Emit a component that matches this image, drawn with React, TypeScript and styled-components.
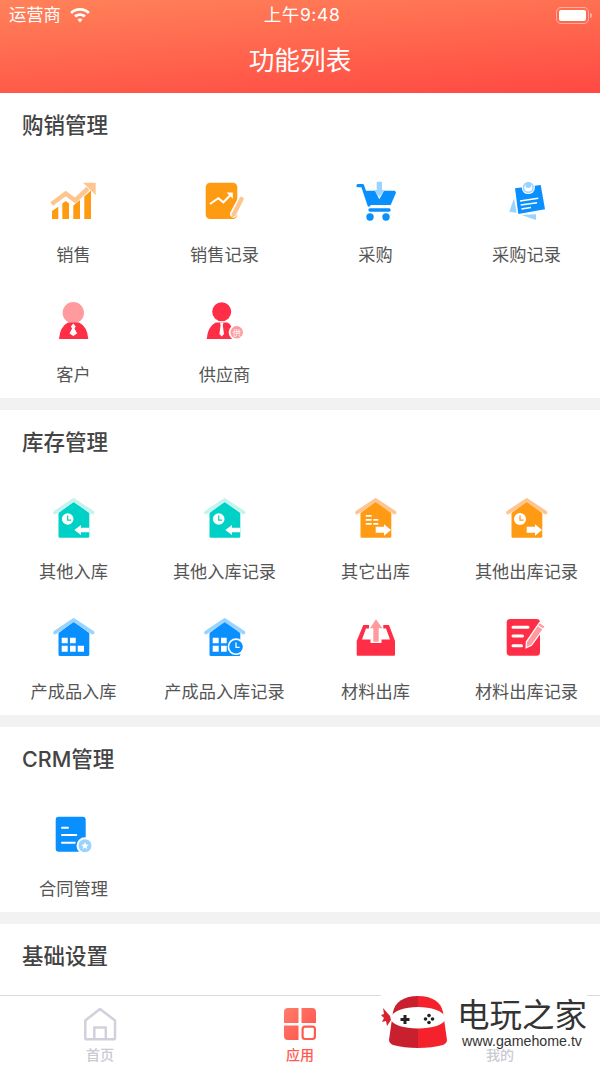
import React from "react";
import styled, { createGlobalStyle } from "styled-components";

const CJK = `Inter, "Noto Sans CJK SC", "Noto Sans", sans-serif`;

const GlobalStyle = createGlobalStyle`
  html, body {
    margin: 0;
    padding: 0;
    background: #fff;
  }
`;

const Page = styled.div`
  width: 600px;
  height: 1067px;
  position: relative;
  display: flex;
  flex-direction: column;
  overflow: hidden;
  font-family: ${CJK};
  background: #f2f2f2;
`;

const Header = styled.header`
  height: 93px;
  flex: none;
  color: #fff;
  background: linear-gradient(176deg, #ff8259 0%, #ff4943 100%);
`;

const StatusBar = styled.div`
  height: 30px;
  display: grid;
  grid-template-columns: 1fr auto 1fr;
  align-items: center;
  padding: 0 11px 0 9px;
`;

const Carrier = styled.div`
  display: flex;
  align-items: center;
  gap: 9px;
  font-size: 17.3px;
  line-height: 30px;
`;

const Clock = styled.div`
  padding-left: 6px;
  font-size: 17.5px;
  line-height: 30px;
  letter-spacing: 0.6px;
`;

const Battery = styled.div`
  justify-self: end;
  width: 33px;
  height: 17px;
  box-sizing: border-box;
  border: 1px solid rgba(255, 255, 255, 0.45);
  border-radius: 5px;
  padding: 2px;
  position: relative;

  &::before {
    content: "";
    display: block;
    height: 100%;
    background: #fff;
    border-radius: 2px;
  }

  &::after {
    content: "";
    position: absolute;
    right: -4px;
    top: 5px;
    width: 2px;
    height: 5px;
    border-radius: 0 2px 2px 0;
    background: rgba(255, 255, 255, 0.45);
  }
`;

const NavTitle = styled.h1`
  margin: 0;
  height: 63px;
  padding-bottom: 1px;
  box-sizing: border-box;
  display: flex;
  align-items: center;
  justify-content: center;
  font-size: 25.7px;
  line-height: 34px;
  font-weight: 400;
`;

const Content = styled.main`
  flex: 1;
  min-height: 0;
  overflow: hidden;
  display: flex;
  flex-direction: column;
  gap: 12px;
`;

const Section = styled.section`
  flex: none;
  background: #fff;

  &:last-child {
    flex: 1;
  }
`;

const SectionTitle = styled.h2`
  margin: 0;
  height: 65px;
  padding: 0 0 1px 22px;
  box-sizing: border-box;
  display: flex;
  align-items: center;
  font-size: 21.5px;
  line-height: 30px;
  font-weight: 500;
  color: #444;
`;

const Grid = styled.div`
  display: grid;
  grid-template-columns: repeat(4, 151px);
  grid-auto-rows: 120px;
  justify-content: center;
`;

const Item = styled.div`
  display: flex;
  flex-direction: column;
  align-items: center;
  padding-top: 20px;
  box-sizing: border-box;
`;

const IconSvg = styled.svg`
  display: block;
  width: 61px;
  height: 48px;
  flex: none;
`;

const Label = styled.span`
  margin-top: 17px;
  font-size: 17.2px;
  line-height: 24px;
  white-space: nowrap;
  color: #555;
`;

const TabBar = styled.nav`
  flex: none;
  height: 72px;
  box-sizing: border-box;
  border-top: 1.5px solid #dcdcdc;
  background: #fff;
  display: grid;
  grid-template-columns: repeat(3, 1fr);
`;

const Tab = styled.div`
  display: flex;
  flex-direction: column;
  align-items: center;
  padding-top: 10.5px;
`;

const TabIconSvg = styled.svg`
  display: block;
  width: 34px;
  height: 34px;
`;

const TabLabel = styled.span<{ $active?: boolean }>`
  margin-top: 4px;
  font-size: 14px;
  line-height: 20px;
  font-weight: 500;
  color: ${(p) => (p.$active ? "#ff5a50" : "#c9cad3")};
`;

const Watermark = styled.div`
  position: absolute;
  left: 381px;
  top: 990px;
  width: 206px;
  height: 59px;
  background: #fff;
  display: flex;
  gap: 8px;
`;

const WatermarkLogo = styled.svg`
  display: block;
  width: 69px;
  height: 59px;
  flex: none;
`;

const WatermarkText = styled.div`
  display: flex;
  flex-direction: column;
  align-items: center;
  width: 128px;
  color: #333;
`;

const WatermarkName = styled.div`
  margin-top: 6px;
  font-size: 32.5px;
  line-height: 40px;
  white-space: nowrap;
`;

const WatermarkUrl = styled.div`
  margin-top: -3px;
  font-family: "Liberation Sans", Arial, sans-serif;
  font-size: 14.2px;
  line-height: 16px;
  white-space: nowrap;
`;

const ORANGE = "#ff9a13";
const ORANGE_L = "#ffc58f";
const BLUE = "#0a8fff";
const BLUE_L = "#99d3ff";
const RED = "#ff2e47";
const RED_L = "#ff9a9e";
const TEAL = "#00d1c6";
const TEAL_L = "#c5f3ee";

const Icon = ({ children }: { children: React.ReactNode }) => (
  <IconSvg viewBox="0 0 61 48">{children}</IconSvg>
);

const SalesIcon = () => (
  <Icon>
    <path fill={ORANGE} d="M9 33l6.3-4.3V41H9zM19.3 25.5l3.4-2.5 3.3 2.500V41h-6.700zM30.300 27.500l6.700-5.500V41h-6.700zM41.300 18.500l6.700-6V41h-6.700z" />
    <path fill="none" stroke={ORANGE_L} strokeWidth="4.600" d="M8.700 26l14-10.500 9.500 7L45 10.500" />
    <path fill={ORANGE_L} d="M40 4.700h12.700V17z" />
  </Icon>
);

const SalesRecordIcon = () => (
  <Icon>
    <rect x="11.700" y="4.700" width="31.600" height="36.300" rx="4.500" fill={ORANGE} />
    <path fill="none" stroke="#fff" strokeWidth="2" d="M16 26l8.300-5.700 5 4 8-8" />
    <path fill="#fff" d="M32.500 14.500h6.300v6.300z" />
    <path fill="none" stroke="#fff" strokeWidth="7" strokeLinecap="round" d="M47.500 21L39.500 36" />
    <path fill="none" stroke={ORANGE_L} strokeWidth="4.400" strokeLinecap="round" d="M47.500 21L40 36" />
    <path fill={ORANGE_L} d="M37.500 35l4.500 2-4 3z" />
  </Icon>
);

const CartIcon = () => (
  <Icon>
    <path fill="none" stroke={BLUE} strokeWidth="3.200" strokeLinecap="round" strokeLinejoin="round" d="M13 7.700h4.600L24 27" />
    <path fill={BLUE} d="M19.300 12.700H30l4.300 8.600 4.700-8.600h11l1 2L45.700 27H23.500z" />
    <path fill={BLUE_L} d="M31.700 3.700H37V12h2.700l-5.400 6.700L29 12h2.700z" />
    <rect x="23.300" y="30.300" width="22.400" height="3.400" rx="1.700" fill={BLUE} />
    <circle cx="25" cy="39" r="3.700" fill={BLUE} />
    <circle cx="41" cy="39" r="3.700" fill={BLUE} />
  </Icon>
);

const NoteIcon = () => (
  <Icon>
    <path fill={BLUE_L} d="M18 20.300l-4.700 13.400 7.400 1zM25.700 37L40 42v-5.700z" />
    <path fill={BLUE} d="M19 10.300L44.700 7 49 31.300 22.300 36z" />
    <circle cx="32.300" cy="9.500" r="6.600" fill="#fff" />
    <circle cx="32.300" cy="9.500" r="4.800" fill="none" stroke={BLUE_L} strokeWidth="1.600" />
    <circle cx="32.300" cy="7" r="3" fill={BLUE_L} />
    <path fill="none" stroke="#fff" strokeWidth="1.600" d="M24 23l18.300-2.700M24.700 27L41 24.700M25.400 31l9.600-1.500" />
  </Icon>
);

const CustomerIcon = () => (
  <Icon>
    <circle cx="30.300" cy="14.700" r="10.700" fill={RED_L} />
    <path fill={RED} d="M16 41q1-12.500 9-16.500h11q8.300 4 9.300 16.500z" />
    <path fill="#fff" d="M30.300 25.500l2.400 3-1.200 2 2.600 5-3.800 2.500-3.800-2.500 2.600-5-1.200-2z" />
  </Icon>
);

const SupplierIcon = () => (
  <Icon>
    <circle cx="27.700" cy="13.700" r="9.500" fill={RED} />
    <path fill={RED} d="M12.700 41q1-12.500 9-16.500h12q5.500 2.500 6 16.500z" />
    <path fill="#fff" d="M26 24.500h3.400l-.6 3 1.200 8.500-2.300 2.500-2.300-2.500 1.200-8.500z" />
    <circle cx="42.700" cy="34.300" r="8" fill="#fff" />
    <circle cx="42.700" cy="34.300" r="6.200" fill={RED_L} />
    <text x="42.700" y="37.500" textAnchor="middle" fontSize="8.500" fill="#fff" fontFamily={CJK}>供</text>
  </Icon>
);

const House = ({
  body,
  roof,
  bottom = 42.7,
  children,
}: {
  body: string;
  roof: string;
  bottom?: number;
  children?: React.ReactNode;
}) => (
  <Icon>
    <path
      fill={body}
      d={`M15.500 18L30.700 6.500 46.300 18V${bottom - 1.5}q0 1.500-1.500 1.500H17q-1.500 0-1.500-1.500z`}
    />
    <path
      fill="none"
      stroke={roof}
      strokeWidth="3.800"
      strokeLinecap="round"
      strokeLinejoin="round"
      d="M12 17.500L30.700 5l18.800 12.500"
    />
    {children}
  </Icon>
);

const ClockFace = ({ bg, cx, cy, r }: { bg: string; cx: number; cy: number; r: number }) => (
  <>
    <circle cx={cx} cy={cy} r={r} fill="#fff" />
    <path
      fill="none"
      stroke={bg}
      strokeWidth="1.200"
      d={`M${cx} ${cy - r * 0.6}V${cy + r * 0.2}H${cx + r * 0.6}`}
    />
  </>
);

const LeftArrow = () => (
  <path fill="#fff" d="M31.300 35l6.700-5v2.700h8.300v4.600H38V40z" />
);

const RightArrow = () => (
  <path fill="#fff" d="M30.700 31.700H39v-2.400l7 5.700-7 5.700v-3h-8.300z" />
);

const TealInIcon = () => (
  <House body={TEAL} roof={TEAL_L}>
    <ClockFace bg={TEAL} cx={24.7} cy={24} r={5.800} />
    <LeftArrow />
  </House>
);

const OrangeOutIcon = () => (
  <House body={ORANGE} roof={ORANGE_L}>
    <path fill="#fff" d="M20.700 20h6v1.700h-6zM20.700 24h6v1.700h-6zM28.300 24h5v1.700h-5zM20.700 28h6v1.700h-6zM28.300 28h5v1.700h-5z" />
    <RightArrow />
  </House>
);

const OrangeClockOutIcon = () => (
  <House body={ORANGE} roof={ORANGE_L}>
    <ClockFace bg={ORANGE} cx={24} cy={24} r={6} />
    <RightArrow />
  </House>
);

const Windows = ({ full }: { full?: boolean }) => (
  <path
    fill="#fff"
    d={`M18.700 22.700h6v5.600h-6zM27 22.700h5.700v5.600H27zM18.700 30.700h6v6h-6zM27 30.700h5.700v6H27z${full ? "M34.700 30.700H41v6h-6.300z" : ""}`}
  />
);

const BlueInIcon = () => (
  <House body={BLUE} roof={BLUE_L} bottom={41}>
    <Windows full />
  </House>
);

const BlueInRecordIcon = () => (
  <House body={BLUE} roof={BLUE_L} bottom={41}>
    <Windows />
    <circle cx="42" cy="31.700" r="8.400" fill="#fff" />
    <circle cx="42" cy="31.700" r="6.800" fill={BLUE} />
    <path fill="none" stroke="#fff" strokeWidth="1.300" d="M42 27.500v4.800h3.600" />
  </House>
);

const InboxIcon = () => (
  <Icon>
    <path
      fill={RED}
      d="M11.700 26L18.300 10H24v3.500h-3L17 24.500h8.500V28H36.500v-3.500H45L41 13.500h-2.700V10H44L50 26v13.700q0 1-1 1H12.700q-1 0-1-1z"
    />
    <path fill={RED_L} d="M31 4.300l6.300 9h-3.600v13.400h-5.400V13.300H25z" />
  </Icon>
);

const FormIcon = () => (
  <Icon>
    <rect x="10.700" y="4" width="33.300" height="36.700" rx="3.500" fill={RED} />
    <path
      fill="none"
      stroke="#fff"
      strokeWidth="3"
      strokeLinecap="round"
      d="M17 12.300h15M17 21h9.500M17 30.700h8.500"
    />
    <path fill={RED_L} stroke="#fff" strokeWidth="1.200" d="M43.500 7.500l5.700 3.800-13.700 19-5.400 2.500.3-6z" />
    <path fill="none" stroke="#fff" strokeWidth="1.200" d="M41.500 10.500l5.700 3.800" />
  </Icon>
);

const ContractIcon = () => (
  <Icon>
    <rect x="12.700" y="4.700" width="30" height="35" rx="3" fill={BLUE} />
    <path fill="none" stroke="#fff" strokeWidth="2" strokeLinecap="round" d="M19 15.700h6M19 23h14.300M19 30.700h12.700" />
    <circle cx="42" cy="33.700" r="8.500" fill="#fff" />
    <circle cx="42" cy="33.700" r="6.500" fill={BLUE_L} />
    <path fill="#fff" d="M42 30l1.100 2.400 2.600.3-1.900 1.700.5 2.600-2.300-1.300-2.300 1.300.5-2.600-1.900-1.700 2.600-.3z" />
  </Icon>
);

const WifiIcon = () => (
  <svg width="20" height="15" viewBox="0 0 20 15" style={{ display: "block" }}>
    <path
      fill="#fff"
      d="M10 0C6.200 0 2.800 1.500.2 3.900l1.900 2C4.200 4 7 2.800 10 2.800s5.800 1.200 7.900 3.100l1.900-2C17.200 1.500 13.800 0 10 0zM10 5.300c-2.300 0-4.300.9-5.900 2.300l2 2c1-.9 2.400-1.500 3.900-1.500s2.900.6 3.900 1.500l2-2C14.300 6.200 12.300 5.300 10 5.300zM10 10.500c-1 0-1.900.4-2.500.9L10 14.500l2.500-3.100c-.6-.5-1.500-.9-2.500-.9z"
    />
  </svg>
);

const HomeTabIcon = () => (
  <TabIconSvg viewBox="0 0 34 34">
    <path
      fill="none"
      stroke="#d0d1dc"
      strokeWidth="2.500"
      strokeLinejoin="round"
      d="M2.300 13.500L17 2 32 13.500V31q0 1.300-1.300 1.300H3.600Q2.300 32.300 2.300 31zM11.300 32.300V20.500h11.500v11.800"
    />
  </TabIconSvg>
);

const AppsTabIcon = () => (
  <TabIconSvg viewBox="0 0 34 34">
    <defs>
      <linearGradient id="apps" x1="0" y1="0" x2="1" y2="1">
        <stop offset="0" stopColor="#ff7d6a" />
        <stop offset="1" stopColor="#ff4f4a" />
      </linearGradient>
    </defs>
    <path
      fill="url(#apps)"
      d="M5 1h10.500v15H1V5q0-4 4-4zM18.500 1H29q4 0 4 4v11H18.500zM1 18.500h14.500V33H5q-4 0-4-4z"
    />
    <rect x="19.600" y="19.600" width="12.300" height="12.400" rx="2.500" fill="#fff" stroke="#ff5a50" strokeWidth="2.200" />
  </TabIconSvg>
);

const HatLogo = () => (
  <WatermarkLogo viewBox="0 0 69 59">
    <path fill="#c9202f" d="M37 6C23 6 14 12 12 22L8 50q0 3 4 5 11 3 25 3z" />
    <path fill="#f5222d" d="M37 6c14 0 23 6 25 16l4 28q0 3-4 5-11 3-25 3z" />
    <path fill="#fff" d="M9 28.500C11 21 24 17 37 17s26 4 28 11.500C63 35 51 38.500 37 38.500S11 35 9 28.500z" />
    <path fill="#d8232f" d="M9 26L2 18l1 6-3 1 3 3-2 4 4-1 1 5 4-6z" />
    <path fill="#222" d="M22.500 25h3v3h3v3h-3v3h-3v-3h-3v-3h3z" />
    <circle cx="48" cy="25.500" r="1.800" fill="#222" />
    <circle cx="48" cy="32.500" r="1.800" fill="#222" />
    <circle cx="44.500" cy="29" r="1.800" fill="#222" />
    <circle cx="51.500" cy="29" r="1.800" fill="#222" />
  </WatermarkLogo>
);

type Entry = { icon: React.ReactNode; label: string };

const sections: { title: string; items: Entry[] }[] = [
  {
    title: "购销管理",
    items: [
      { icon: <SalesIcon />, label: "销售" },
      { icon: <SalesRecordIcon />, label: "销售记录" },
      { icon: <CartIcon />, label: "采购" },
      { icon: <NoteIcon />, label: "采购记录" },
      { icon: <CustomerIcon />, label: "客户" },
      { icon: <SupplierIcon />, label: "供应商" },
    ],
  },
  {
    title: "库存管理",
    items: [
      { icon: <TealInIcon />, label: "其他入库" },
      { icon: <TealInIcon />, label: "其他入库记录" },
      { icon: <OrangeOutIcon />, label: "其它出库" },
      { icon: <OrangeClockOutIcon />, label: "其他出库记录" },
      { icon: <BlueInIcon />, label: "产成品入库" },
      { icon: <BlueInRecordIcon />, label: "产成品入库记录" },
      { icon: <InboxIcon />, label: "材料出库" },
      { icon: <FormIcon />, label: "材料出库记录" },
    ],
  },
  {
    title: "CRM管理",
    items: [{ icon: <ContractIcon />, label: "合同管理" }],
  },
  { title: "基础设置", items: [] },
];

const App = () => {
  return (
    <Page>
      <GlobalStyle />
      <Header>
        <StatusBar>
          <Carrier>
            运营商
            <WifiIcon />
          </Carrier>
          <Clock>上午9:48</Clock>
          <Battery />
        </StatusBar>
        <NavTitle>功能列表</NavTitle>
      </Header>
      <Content>
        {sections.map((section) => (
          <Section key={section.title}>
            <SectionTitle>{section.title}</SectionTitle>
            <Grid>
              {section.items.map((item) => (
                <Item key={item.label}>
                  {item.icon}
                  <Label>{item.label}</Label>
                </Item>
              ))}
            </Grid>
          </Section>
        ))}
      </Content>
      <TabBar>
        <Tab>
          <HomeTabIcon />
          <TabLabel>首页</TabLabel>
        </Tab>
        <Tab>
          <AppsTabIcon />
          <TabLabel $active>应用</TabLabel>
        </Tab>
        <Tab>
          <HomeTabIcon />
          <TabLabel>我的</TabLabel>
        </Tab>
      </TabBar>
      <Watermark>
        <HatLogo />
        <WatermarkText>
          <WatermarkName>电玩之家</WatermarkName>
          <WatermarkUrl>www.gamehome.tv</WatermarkUrl>
        </WatermarkText>
      </Watermark>
    </Page>
  );
};

export default App;
